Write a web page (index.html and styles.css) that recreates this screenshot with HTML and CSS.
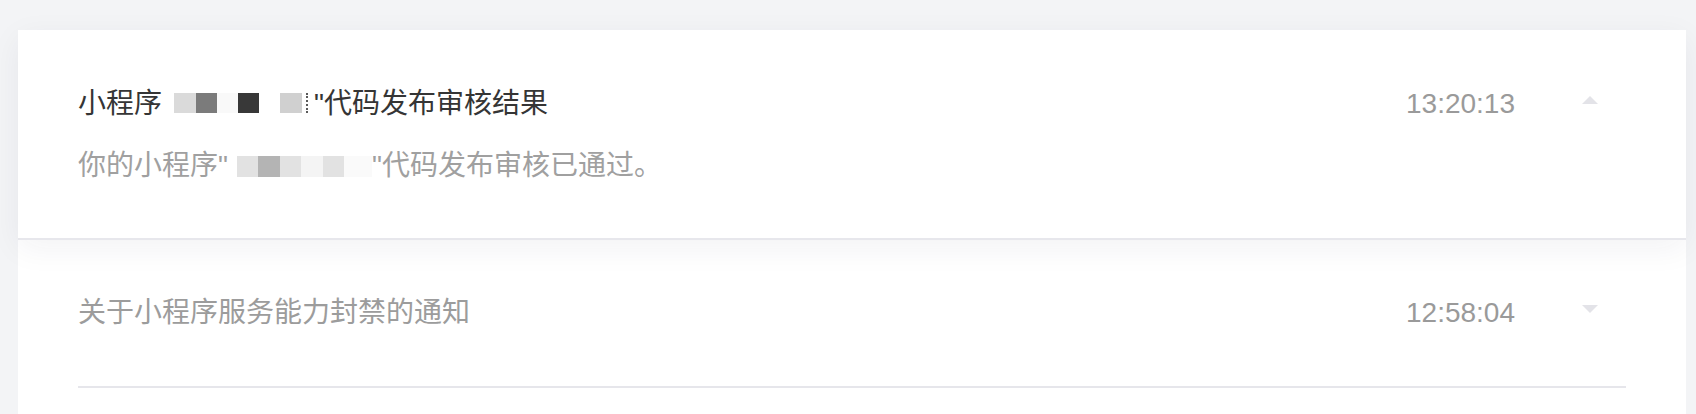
FILE: index.html
```html
<!DOCTYPE html>
<html lang="zh-CN">
<head>
<meta charset="utf-8">
<title>消息通知</title>
<link rel="stylesheet" href="styles.css">
</head>
<body>
<div class="page">
  <div class="card">
    <div class="item item-open">
      <div class="item-head">
        <div class="item-title">小程序<span class="mosaic mosaic-title"><i class="cell w22 t-light"></i><i class="cell w21 t-mid"></i><i class="cell w21 t-faint"></i><i class="cell w21 t-dark"></i><i class="cell w21 t-white"></i><i class="cell w22 t-light2"></i><i class="dots"></i></span>"代码发布审核结果</div>
        <div class="item-time">13:20:13</div>
        <span class="caret caret-up"></span>
      </div>
      <div class="item-desc">你的小程序"<span class="mosaic mosaic-desc"><i class="cell w21 d-light"></i><i class="cell w22 d-mid"></i><i class="cell w21 d-light"></i><i class="cell w22 d-faint"></i><i class="cell w21 d-light"></i><i class="cell w28 d-faint2"></i></span>"代码发布审核已通过。</div>
    </div>
    <div class="item">
      <div class="item-head item-head-line">
        <div class="item-title item-title-muted">关于小程序服务能力封禁的通知</div>
        <div class="item-time">12:58:04</div>
        <span class="caret caret-down"></span>
      </div>
    </div>
  </div>
</div>
</body>
</html>
```
FILE: styles.css
```css
* { box-sizing: border-box; }

html, body {
  margin: 0;
  padding: 0;
}

body {
  background: #f3f4f6;
  font-family: "Liberation Sans", "Noto Sans CJK SC", sans-serif;
  color: #333333;
}

.page {
  padding: 30px 10px 0 18px;
}

.card {
  background: #ffffff;
  padding-bottom: 60px;
}

.item {
  background: #ffffff;
  padding: 0 60px;
}

.item-open {
  position: relative;
  z-index: 1;
  padding: 54px 60px 52px;
  border-bottom: 2px solid #e7e7ec;
  box-shadow: 0 8px 30px rgba(30, 35, 60, 0.06);
}

.item-head {
  display: flex;
  align-items: center;
  line-height: 40px;
}

.item-head-line {
  padding: 53px 0;
  border-bottom: 2px solid #e6e6eb;
}

.item-title {
  flex: 1;
  font-size: 28px;
  color: #353535;
  white-space: nowrap;
}

.item-title-muted {
  color: #9c9c9c;
}

.item-time {
  font-size: 28px;
  color: #9a9a9a;
  margin-right: 67px;
}

.caret {
  width: 0;
  height: 0;
  border-left: 8px solid transparent;
  border-right: 8px solid transparent;
  margin-right: 28px;
  margin-bottom: 8px;
}

.caret-up {
  border-bottom: 8px solid #e3e3e8;
}

.caret-down {
  border-top: 8px solid #e3e3e8;
}

.item-desc {
  margin-top: 22px;
  font-size: 28px;
  line-height: 40px;
  color: #a0a0a0;
  white-space: nowrap;
}

.mosaic {
  display: inline-block;
  white-space: nowrap;
  font-size: 0;
  line-height: 0;
}

.mosaic-title {
  margin-left: 12px;
  vertical-align: 0;
}

.mosaic-desc {
  margin-left: 9px;
  vertical-align: -2px;
}

.cell {
  display: inline-block;
  height: 20px;
  vertical-align: bottom;
}

.mosaic-desc .cell {
  height: 21px;
}

.w21 { width: 21px; }
.w22 { width: 22px; }
.w28 { width: 28px; }

.t-light { background: #dadada; }
.t-mid { background: #7b7b7b; }
.t-faint { background: #f9f9f9; }
.t-dark { background: #383838; }
.t-white { background: #ffffff; }
.t-light2 { background: #d0d0d0; }

.d-light { background: #e2e2e2; }
.d-mid { background: #b4b4b4; }
.d-faint { background: #f4f4f4; }
.d-faint2 { background: #fafafa; }

.dots {
  display: inline-block;
  width: 2px;
  height: 20px;
  margin-left: 4px;
  margin-right: 6px;
  vertical-align: bottom;
  border-left: 2px dotted #5a5a5a;
}
```
